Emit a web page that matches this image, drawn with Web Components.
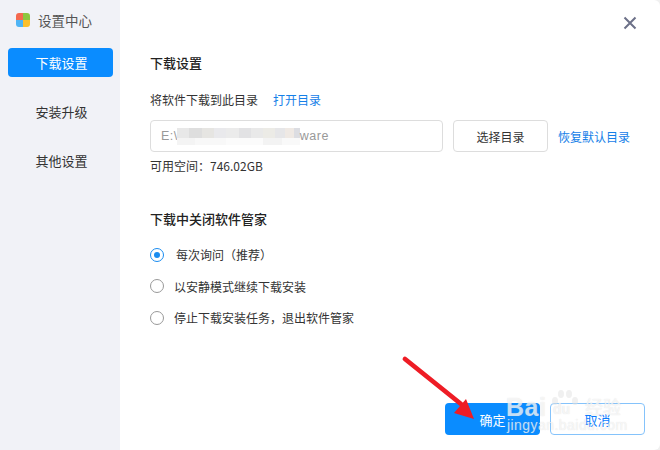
<!DOCTYPE html>
<html lang="zh">
<head>
<meta charset="utf-8">
<style>
  html, body { margin: 0; height: 100%; background: #f0f0f0; overflow: hidden; }
  body { font-family: "Noto Sans CJK SC", "Liberation Sans", sans-serif; font-size: 12px; color: #333; }
</style>
</head>
<body>
<settings-window>
  <side-nav slot="nav"></side-nav>
  <download-panel></download-panel>
</settings-window>

<script>
class SettingsWindow extends HTMLElement {
  connectedCallback() {
    this.attachShadow({ mode: 'open' });
    this.shadowRoot.innerHTML = `
      <style>
        :host { display: flex; width: 660px; height: 450px; position: relative; background: #fff; border-radius: 0 6px 6px 0; }
        svg.arrow { position: absolute; left: 395px; top: 350px; }
      </style>
      <slot name="nav"></slot>
      <slot></slot>
      <svg class="arrow" width="90" height="80" viewBox="0 0 90 80">
        <path d="M10 9 L66 54" stroke="#ee1c25" stroke-width="4.8" stroke-linecap="round" fill="none"/>
        <path d="M79 69 L71 49 L59 63 Z" fill="#ee1c25"/>
      </svg>
      <baidu-mark></baidu-mark>
    `;
  }
}

// watermark lying over the dialog buttons
class BaiduMark extends HTMLElement {
  connectedCallback() {
    this.attachShadow({ mode: 'open' });
    this.shadowRoot.innerHTML = `
      <style>
        :host { display: block; position: absolute; left: 505px; top: 390px; width: 125px; height: 46px; pointer-events: none; font-family: "Liberation Sans", sans-serif; color: rgba(255,255,255,.7); text-shadow: 0 0 1px rgba(170,170,170,.4); }
        span { position: absolute; white-space: nowrap; }
        .bai { left: 1px; top: 3px; font-size: 25px; font-weight: bold; letter-spacing: .5px; }
        .du { left: 48px; top: 11px; font-size: 14px; font-weight: bold; }
        .cn { left: 80px; top: 3px; font: 18px "Noto Sans CJK SC", sans-serif; }
        .url { left: 2px; top: 27px; font-size: 14px; letter-spacing: .45px; }
        svg { position: absolute; left: 45px; top: 0; }
      </style>
      <svg width="30" height="26" viewBox="0 0 30 26" fill="rgba(225,225,225,.5)">
        <ellipse cx="5" cy="11" rx="3" ry="4"/>
        <ellipse cx="11" cy="4" rx="3" ry="4"/>
        <ellipse cx="19" cy="4" rx="3" ry="4"/>
        <ellipse cx="25" cy="11" rx="3" ry="4"/>
      </svg>
      <span class="bai">Bai</span><span class="du">du</span><span class="cn">经验</span>
      <span class="url">jingyan.baidu.com</span>
    `;
  }
}

class SideNav extends HTMLElement {
  connectedCallback() {
    this.attachShadow({ mode: 'open' });
    this.shadowRoot.innerHTML = `
      <style>
        :host { display: block; width: 120px; height: 450px; box-sizing: border-box; background: #f1f2f7; padding: 0 7px 0 8px; }
        .brand { display: flex; align-items: center; gap: 8px; height: 40px; padding-left: 8px; color: #555; font-size: 13.5px; }
        .item { display: flex; align-items: center; justify-content: center; height: 29px; margin-bottom: 20px; border-radius: 4px; color: #333; font-size: 13px; padding-left: 2px; }
        .item.on { background: #0a8cff; color: #fff; margin-top: 8px; }
      </style>
      <div class="brand">
        <svg width="14" height="14" viewBox="0 0 14 14">
          <path d="M3 0H7V7H0V3A3 3 0 0 1 3 0Z" fill="#f4694f"/>
          <path d="M7 0H11A3 3 0 0 1 14 3V7H7Z" fill="#8cc63f"/>
          <path d="M0 7H7V14H3A3 3 0 0 1 0 11Z" fill="#4fb4f5"/>
          <path d="M7 7H14V11A3 3 0 0 1 11 14H7Z" fill="#fbc02d"/>
        </svg>
        <span>设置中心</span>
      </div>
      <div class="item on">下载设置</div>
      <div class="item">安装升级</div>
      <div class="item">其他设置</div>
    `;
  }
}

class DownloadPanel extends HTMLElement {
  connectedCallback() {
    this.attachShadow({ mode: 'open' });
    this.shadowRoot.innerHTML = `
      <style>
        :host { display: block; flex: 1; box-sizing: border-box; position: relative; padding: 53px 0 0 30px; font-size: 12px; color: #333; }
        h2 { margin: 0; font-size: 13px; line-height: 20px; font-weight: 500; color: #222; }
        a { color: #1580e8; text-decoration: none; }
        .close { position: absolute; left: 503px; top: 16px; }
        .line { display: flex; gap: 15px; margin-top: 17px; line-height: 20px; }
        .dir { display: flex; align-items: center; margin-top: 10px; }
        .input { width: 293px; height: 32px; box-sizing: border-box; border: 1px solid #ddd; border-radius: 4px; padding-left: 10px; display: flex; align-items: center; color: #999; font: 12.5px "Liberation Sans", sans-serif; letter-spacing: .5px; }
        .blur { width: 123px; height: 17px; margin-left: -1px; background:
          linear-gradient(90deg, #e8e8e8 0 10%, #dedede 10% 20%, #e6e5e2 20% 30%, #e9e9ec 30% 40%, #ebebeb 40% 50%, #e2e2e4 50% 60%, #e9e9e9 60% 70%, #ecebe6 70% 80%, #e6e6e8 80% 88%, #efe9e4 88% 95%, #dcdde2 95%) 0 0 / 100% 10px no-repeat,
          linear-gradient(90deg, #f4f4f4 0 15%, #f8f8f8 15% 40%, #fbfbfb 40% 70%, #f3f3f3 70% 85%, #f9f9f9 85%) 0 10px / 100% 7px no-repeat; }
        .btn { width: 95px; height: 32px; box-sizing: border-box; border: 1px solid #ddd; border-radius: 4px; margin-left: 10px; display: flex; align-items: center; justify-content: center; color: #333; }
        .dir a { margin-left: 10px; }
        .free { line-height: 18px; margin-top: 5px; }
        h2.second { margin-top: 34px; }
        .radios { margin-top: 10px; }
      </style>
      <svg class="close" width="14" height="14" viewBox="0 0 14 14"><path d="M1.5 1.5L12.5 12.5M12.5 1.5L1.5 12.5" stroke="#6c7088" stroke-width="2"/></svg>
      <h2>下载设置</h2>
      <div class="line"><span>将软件下载到此目录</span><a>打开目录</a></div>
      <div class="dir">
        <div class="input">E:\\<span class="blur"></span>ware</div>
        <div class="btn">选择目录</div>
        <a>恢复默认目录</a>
      </div>
      <div class="free">可用空间：746.02GB</div>
      <h2 class="second">下载中关闭软件管家</h2>
      <div class="radios">
        <radio-row checked>每次询问（推荐）</radio-row>
        <radio-row>以安静模式继续下载安装</radio-row>
        <radio-row>停止下载安装任务，退出软件管家</radio-row>
      </div>
      <dialog-actions></dialog-actions>
    `;
  }
}

class RadioRow extends HTMLElement {
  connectedCallback() {
    this.attachShadow({ mode: 'open' });
    this.shadowRoot.innerHTML = `
      <style>
        :host { display: flex; align-items: center; gap: 10px; height: 31.5px; }
        .dot { width: 14px; height: 14px; box-sizing: border-box; border-radius: 50%; border: 1px solid #999; background: #fff; display: flex; align-items: center; justify-content: center; }
        :host([checked]) .dot { border-color: #1a8cf0; }
        :host([checked]) .dot::after { content: ""; width: 6px; height: 6px; border-radius: 50%; background: #1a8cf0; }
        :host([checked]) { gap: 12px; }
      </style>
      <span class="dot"></span><slot></slot>
    `;
  }
}

class DialogActions extends HTMLElement {
  connectedCallback() {
    this.attachShadow({ mode: 'open' });
    this.shadowRoot.innerHTML = `
      <style>
        :host { display: flex; gap: 10px; position: absolute; left: 325px; top: 403px; }
        div { width: 95px; height: 32px; box-sizing: border-box; border-radius: 4px; display: flex; align-items: center; justify-content: center; font-size: 13px; }
        .ok { background: #0a8cff; color: #fff; }
        .cancel { border: 1px solid #85c3fb; color: #0a7cff; }
      </style>
      <div class="ok">确定</div><div class="cancel">取消</div>
    `;
  }
}

customElements.define('settings-window', SettingsWindow);
customElements.define('baidu-mark', BaiduMark);
customElements.define('side-nav', SideNav);
customElements.define('download-panel', DownloadPanel);
customElements.define('radio-row', RadioRow);
customElements.define('dialog-actions', DialogActions);
</script>
</body>
</html>
